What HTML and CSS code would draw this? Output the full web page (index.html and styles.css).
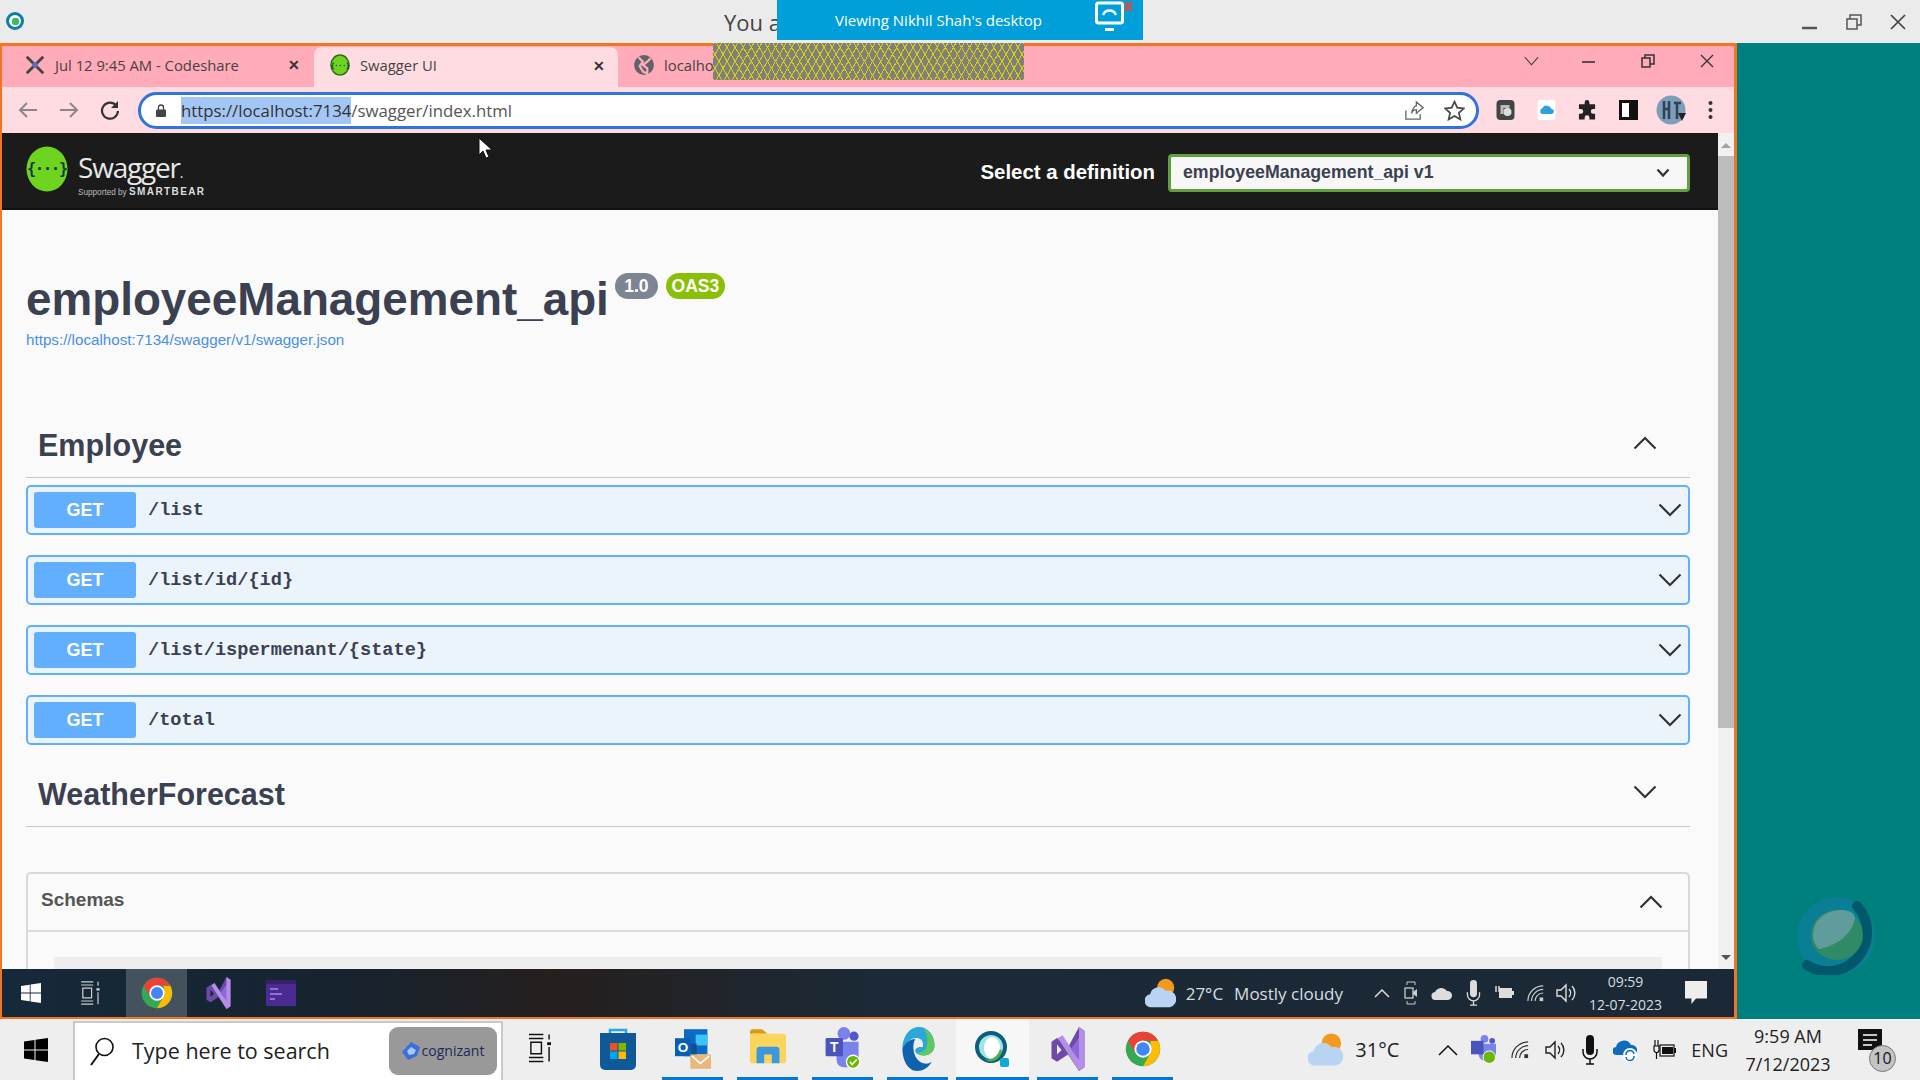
FILE: index.html
```html
<!DOCTYPE html>
<html lang="en">
<head>
    <meta charset="UTF-8">
    <meta name="viewport" content="width=device-width, initial-scale=1.0">
    <title>Swagger UI</title>
    <link rel="stylesheet" href="styles.css">
</head>
<body>

    <svg class="sprites" width="0" height="0">
        <symbol id="chrome" viewBox="0 0 48 48">
            <circle cx="24" cy="24" r="23" fill="#34a853"/>
            <path fill="#fbbc04" d="M44 13A23 23 0 0 1 24 47L34 29V13Z"/>
            <path fill="#ea4335" d="M24 1A23 23 0 0 1 44 13H24L14 30L4 13A23 23 0 0 1 24 1Z"/>
            <circle cx="24" cy="24" r="11.5" fill="#fff"/>
            <circle cx="24" cy="24" r="9" fill="#4285f4"/>
        </symbol>
        <symbol id="vs" viewBox="0 0 36 48">
            <path fill="#6d4aa8" d="M0 16L6 12L18 22L30 0L36 4V44L30 48L18 30L6 38L0 34ZM6 19V30L11 25Z"/>
            <path fill="#b48fe8" d="M30 0L36 4V44L30 48L7 12L12 9L22 24L30 12Z"/>
            <path fill="#8f67d8" d="M30 13V36L21 24Z"/>
        </symbol>
        <symbol id="cloud" viewBox="0 0 36 36">
            <circle cx="24" cy="11" r="10" fill="#f39a1e"/>
            <path fill="#b9d4f2" d="M8 34A7.500 7.500 0 0 1 6 19A10 10 0 0 1 24 15A9 9 0 0 1 29 34Z"/>
        </symbol>
        <symbol id="wifi" viewBox="0 0 20 20">
            <g fill="none" stroke="currentColor" stroke-width="1.300">
                <path d="M1 19A17 17 0 0 1 18 2"/>
                <path d="M5 19A13 13 0 0 1 18 6"/>
                <path d="M9 19A9 9 0 0 1 18 10"/>
            </g>
            <rect x="14" y="15" width="4" height="4" fill="currentColor"/>
        </symbol>
        <symbol id="speaker" viewBox="0 0 22 22">
            <g fill="none" stroke="currentColor" stroke-width="1.400">
                <path d="M1 8H5L10 3V19L5 14H1Z"/>
                <path d="M13 7A6 6 0 0 1 13 15"/>
                <path d="M16 4A10 10 0 0 1 16 18"/>
            </g>
        </symbol>
        <symbol id="mic" viewBox="0 0 16 30">
            <rect x="4" y="0" width="8" height="20" rx="4" fill="currentColor"/>
            <path d="M1 14V17A7 7 0 0 0 15 17V14M8 24V29M4 29H12" fill="none" stroke="currentColor" stroke-width="1.500"/>
        </symbol>
        <symbol id="chev-down" viewBox="0 0 24 14">
            <path d="M1.500 1.500L12 12L22.500 1.500" fill="none" stroke="currentColor" stroke-width="2.200"/>
        </symbol>
        <symbol id="chev-up" viewBox="0 0 24 14">
            <path d="M1.500 12.500L12 2L22.500 12.500" fill="none" stroke="currentColor" stroke-width="2.200"/>
        </symbol>
        <symbol id="winlogo" viewBox="0 0 24 24">
            <path fill="currentColor" d="M0 3.500L10.500 2V11.500H0ZM11.500 1.800L24 0V11.500H11.500ZM0 12.500H10.500V22L0 20.500ZM11.500 12.500H24V24L11.500 22.200Z"/>
        </symbol>
        <symbol id="taskview" viewBox="0 0 24 30">
            <path d="M1 1H16M1 5H16M1 25H16M1 29H16M3 9H14V21H3ZM22 1V6M22 14V29" fill="none" stroke="currentColor" stroke-width="1.500"/>
            <rect x="20" y="9" width="4" height="3" fill="currentColor"/>
        </symbol>
        <symbol id="bell" viewBox="0 0 24 26">
            <path fill="currentColor" d="M0 0H24V19H12L7 25V19H0Z"/>
        </symbol>
    </svg>

    <header class="titlebar">
        <svg class="app-logo" viewBox="0 0 18 18">
            <circle cx="9" cy="9" r="7.500" fill="#fff" stroke="#0a7fa0" stroke-width="3"/>
            <circle cx="9.500" cy="9.500" r="3.800" fill="#49b36b"/>
        </svg>
        <span class="titlebar-text">You a</span>
        <div class="win-controls win-controls-outer">
            <svg viewBox="0 0 16 16"><path d="M0 14H15" stroke="#555" stroke-width="2.500"/></svg>
            <svg viewBox="0 0 16 16"><path d="M1 5H11V15H1ZM4 5V1H15V11H11" fill="none" stroke="#555" stroke-width="1.500"/></svg>
            <svg viewBox="0 0 16 16"><path d="M1 1L15 15M15 1L1 15" stroke="#444" stroke-width="1.700"/></svg>
        </div>
    </header>

    <div class="share-banner">
        <span>Viewing Nikhil Shah's desktop</span>
        <svg class="share-icon" viewBox="0 0 38 34">
            <rect x="1.500" y="2" width="26" height="20" rx="2" fill="none" stroke="#fff" stroke-width="3"/>
            <path d="M8 14A7 7 0 0 1 21 14" fill="none" stroke="#fff" stroke-width="2.500"/>
            <rect x="10" y="27" width="9" height="3" fill="#fff"/>
            <path d="M30 1L37 10M37 1L30 10" stroke="#e0483e" stroke-width="2.500"/>
        </svg>
    </div>

    <main class="desk">
        <section class="remote">
            <div class="tabs">
                <div class="tab">
                    <svg class="fav" viewBox="0 0 24 24">
                        <path d="M3 3L21 21M21 3L3 21" stroke="#444" stroke-width="3"/>
                        <circle cx="12" cy="12" r="3" fill="#5a6fd0"/>
                    </svg>
                    <span class="tab-title">Jul 12 9:45 AM - Codeshare</span>
                    <span class="tab-x">✕</span>
                </div>
                <div class="tab tab-active">
                    <svg class="fav" viewBox="0 0 42 46">
                        <ellipse cx="21" cy="23" rx="19" ry="21" fill="#6fd41f" stroke="#2c6e1a" stroke-width="3"/>
                        <text x="21" y="29" text-anchor="middle" class="logo-braces">{···}</text>
                    </svg>
                    <span class="tab-title">Swagger UI</span>
                    <span class="tab-x">✕</span>
                </div>
                <div class="tab tab-third">
                    <svg class="fav" viewBox="0 0 20 20">
                        <circle cx="10" cy="10" r="9" fill="#5f6368"/>
                        <path d="M5 3L9 7L6 11L9 16L13 18L13 13L9 10L13 7L16 4" fill="none" stroke="#ffabb9" stroke-width="2"/>
                    </svg>
                    <span class="tab-title">localho</span>
                </div>
                <div class="win-controls win-controls-inner">
                    <svg class="tab-list" viewBox="0 0 16 10"><path d="M1 1L8 9L15 1" fill="none" stroke="#333" stroke-width="1.200"/></svg>
                    <svg viewBox="0 0 14 14"><path d="M0 8H13" stroke="#333" stroke-width="1.600"/></svg>
                    <svg viewBox="0 0 14 14"><path d="M1 4H9V13H1ZM4 4V1H13V10H9" fill="none" stroke="#333" stroke-width="1.500"/></svg>
                    <svg viewBox="0 0 14 14"><path d="M1 1L13 13M13 1L1 13" stroke="#333" stroke-width="1.300"/></svg>
                </div>
            </div>
            <div class="hatch"></div>

            <div class="toolbar">
                <svg class="nav-btn" viewBox="0 0 20 20"><path d="M19 10H2M9 3L2 10L9 17" fill="none" stroke="#8d8589" stroke-width="2"/></svg>
                <svg class="nav-btn" viewBox="0 0 20 20"><path d="M1 10H18M11 3L18 10L11 17" fill="none" stroke="#8d8589" stroke-width="2"/></svg>
                <svg class="nav-btn" viewBox="0 0 20 20"><path d="M16.500 6A8 8 0 1 0 18 11" fill="none" stroke="#333" stroke-width="2.200"/><path d="M18 1V8H11Z" fill="#333"/></svg>
                <div class="omnibox">
                    <svg class="lock" viewBox="0 0 10 13"><path d="M2.500 6V3.500A2.500 2.500 0 0 1 7.500 3.500V6" fill="none" stroke="#444" stroke-width="1.300"/><rect y="5.500" width="10" height="7.500" rx="1" fill="#444"/></svg>
                    <span class="url"><span class="url-sel">https://localhost:7134</span>/swagger/index.html</span>
                    <svg class="omni-icon" viewBox="0 0 22 22"><path d="M3 11V20H18V15M9 14C10 8 13 6 14 6V2L21 8L14 14V10C12 10 10 11 9 14Z" fill="none" stroke="#666" stroke-width="1.400"/></svg>
                    <svg class="omni-icon" viewBox="0 0 20 20"><path d="M10 1.500L12.600 7.300L19 8L14.200 12.200L15.600 18.500L10 15.200L4.400 18.500L5.800 12.200L1 8L7.400 7.300Z" fill="none" stroke="#444" stroke-width="1.600"/></svg>
                </div>
                <div class="ext-icons">
                    <svg viewBox="0 0 18 20"><rect width="18" height="20" rx="4" fill="#444"/><circle cx="11" cy="12" r="4" fill="#ddd"/><path d="M4 5H13V8H7V14H4Z" fill="#bbb"/></svg>
                    <svg viewBox="0 0 18 20"><rect width="18" height="20" rx="3" fill="#fff"/><path d="M4 14A3.500 3.500 0 0 1 5 8A5 5 0 0 1 14 9A2.500 2.500 0 0 1 14 14Z" fill="#2f9fe0"/></svg>
                    <svg viewBox="0 0 20 20"><path fill="#222" d="M7 2A2.500 2.500 0 0 1 12 2V4H18V9H16A2.500 2.500 0 0 0 16 14H18V20H12V18A2.500 2.500 0 0 0 7 18V20H1V14H3A2.500 2.500 0 0 0 3 9H1V4H7Z"/></svg>
                    <svg viewBox="0 0 19 20"><path d="M1.500 1.500H17.500V18.500H1.500Z" fill="#fff" stroke="#111" stroke-width="3"/><rect x="10" y="2" width="7" height="16" fill="#111"/></svg>
                    <svg class="avatar" viewBox="0 0 30 30"><circle cx="15" cy="15" r="14.500" fill="#7e9db8"/><path d="M8 6V24M13 6V24M8 14H13M18 8H25M21 8V24" stroke="#2d4257" stroke-width="2.500"/><path d="M22 18H30L26 26Z" fill="#222"/></svg>
                    <svg class="dots" viewBox="0 0 4 20"><circle cx="2" cy="3" r="2" fill="#333"/><circle cx="2" cy="10" r="2" fill="#333"/><circle cx="2" cy="17" r="2" fill="#333"/></svg>
                </div>
            </div>

            <div class="viewport">
                <div class="swagger-page">
                    <div class="topbar">
                        <div class="brand">
                            <svg class="brand-mark" viewBox="0 0 42 46">
                                <ellipse cx="21" cy="23" rx="20.500" ry="22.500" fill="#6fd41f"/>
                                <text x="21" y="28" text-anchor="middle" class="logo-braces">{···}</text>
                            </svg>
                            <div class="brand-text">
                                <span class="brand-name">Swagger<small>.</small></span>
                                <span class="brand-sub">Supported by <b>SMARTBEAR</b></span>
                            </div>
                        </div>
                        <label class="definition">Select a definition</label>
                        <div class="select-box">
                            <span>employeeManagement_api v1</span>
                            <svg class="select-chev" viewBox="0 0 14 10"><path d="M1.500 1.500L7 7.500L12.500 1.500" fill="none" stroke="#333" stroke-width="2.200"/></svg>
                        </div>
                    </div>

                    <div class="content">
                        <div class="info">
                            <div class="title-row">
                                <h1>employeeManagement_api</h1>
                                <span class="badge badge-version">1.0</span>
                                <span class="badge badge-oas">OAS3</span>
                            </div>
                            <a class="spec-link" href="#">https://localhost:7134/swagger/v1/swagger.json</a>
                        </div>

                        <div class="tag-head">
                            <h3>Employee</h3>
                            <svg class="tag-chev"><use href="#chev-up"/></svg>
                        </div>
                        <div class="ops">
                            <div class="op"><span class="op-method">GET</span><span class="op-path">/list</span><svg class="op-chev"><use href="#chev-down"/></svg></div>
                            <div class="op"><span class="op-method">GET</span><span class="op-path">/list/id/{id}</span><svg class="op-chev"><use href="#chev-down"/></svg></div>
                            <div class="op"><span class="op-method">GET</span><span class="op-path">/list/ispermenant/{state}</span><svg class="op-chev"><use href="#chev-down"/></svg></div>
                            <div class="op"><span class="op-method">GET</span><span class="op-path">/total</span><svg class="op-chev"><use href="#chev-down"/></svg></div>
                        </div>

                        <div class="tag-head tag-head-second">
                            <h3>WeatherForecast</h3>
                            <svg class="tag-chev"><use href="#chev-down"/></svg>
                        </div>

                        <div class="schemas">
                            <div class="schemas-head">
                                <h4>Schemas</h4>
                                <svg class="schemas-chev"><use href="#chev-up"/></svg>
                            </div>
                            <div class="schemas-body"><div class="schema-item"></div></div>
                        </div>
                    </div>
                </div>
                <div class="scrollbar">
                    <span class="arrow-up"></span>
                    <div class="thumb"></div>
                    <span class="arrow-down"></span>
                </div>
            </div>

            <div class="inner-taskbar">
                <svg class="it-start"><use href="#winlogo"/></svg>
                <svg class="it-view"><use href="#taskview"/></svg>
                <div class="it-tile"><svg class="it-chrome"><use href="#chrome"/></svg></div>
                <svg class="it-vs"><use href="#vs"/></svg>
                <svg class="it-term" viewBox="0 0 30 26"><rect width="30" height="26" rx="1" fill="#4b2a91"/><rect width="30" height="4" fill="#37206b"/><path d="M4 9H12M4 14H16M4 19H9" stroke="#8d73c9" stroke-width="2"/></svg>

                <div class="it-tray">
                    <svg class="it-cloud"><use href="#cloud"/></svg>
                    <span class="it-temp">27°C</span>
                    <span class="it-weather">Mostly cloudy</span>
                    <svg class="it-caret" viewBox="0 0 16 10"><path d="M1 9L8 2L15 9" fill="none" stroke="#ddd" stroke-width="1.500"/></svg>
                    <svg class="it-sys-cam" viewBox="0 0 14 24"><path d="M3 4V1H11V4M3 20V23H11V20" fill="none" stroke="#ccc"/><rect x="1" y="7" width="8" height="10" fill="none" stroke="#ccc" stroke-width="1.300"/><path d="M9 11L13 8V16L9 13" fill="#ccc"/></svg>
                    <svg class="it-sys-cloud" viewBox="0 0 22 16"><path d="M5 15A4 4 0 0 1 4 7A7 7 0 0 1 16 6A4.500 4.500 0 0 1 17 15Z" fill="#ddd"/></svg>
                    <svg class="it-sys-mic"><use href="#mic"/></svg>
                    <svg class="it-sys-batt" viewBox="0 0 20 16"><rect x="5" y="3" width="13" height="10" fill="#ddd"/><path d="M2 1V7M5 1V7" stroke="#ddd" stroke-width="1.500"/><rect x="18" y="6" width="2" height="4" fill="#ddd"/></svg>
                    <svg class="it-sys-wifi"><use href="#wifi"/></svg>
                    <svg class="it-sys-speaker"><use href="#speaker"/></svg>
                    <div class="it-clock"><span>09:59</span><span>12-07-2023</span></div>
                    <svg class="it-notif"><use href="#bell"/></svg>
                </div>
            </div>
        </section>

        <aside class="teal">
            <svg class="teal-logo" viewBox="0 0 78 78">
                <circle cx="39" cy="39" r="39" fill="#0a7e95"/>
                <path d="M60 9A39 39 0 0 1 10 68" fill="none" stroke="#00586a" stroke-width="10" stroke-linecap="round"/>
                <ellipse cx="40" cy="38" rx="26" ry="25" fill="#2f8a65"/>
                <path d="M16 38C16 22 30 13 44 13C52 13 56 15 58 20C56 36 42 48 22 52C18 48 16 44 16 38Z" fill="#619c9c"/>
            </svg>
        </aside>
    </main>

    <footer class="taskbar">
        <svg class="tb-start"><use href="#winlogo"/></svg>
        <div class="search">
            <svg class="search-icon" viewBox="0 0 24 30"><circle cx="14.500" cy="10" r="8.500" fill="none" stroke="#111" stroke-width="1.600"/><path d="M9 17L1 28" stroke="#111" stroke-width="2"/></svg>
            <span class="search-text">Type here to search</span>
            <div class="chip">
                <svg class="chip-logo" viewBox="0 0 18 18"><path d="M9 0L18 5L15 14L6 18L0 10Z" fill="#3a6fd8"/><path d="M9 5L14 8L12 12L7 13L5 9Z" fill="#a8c8f0"/></svg>
                <span>cognizant</span>
            </div>
        </div>
        <svg class="tb-view"><use href="#taskview"/></svg>
        <div class="apps">
            <div class="app">
                <svg class="app-icon" viewBox="0 0 36 44">
                    <path d="M10 8V3H26V8" fill="none" stroke="#27a6e8" stroke-width="2.500"/>
                    <path d="M0 6H36V38A5 5 0 0 1 31 43H5A5 5 0 0 1 0 38Z" fill="#0f5a96"/>
                    <rect x="10" y="16" width="7.500" height="7.500" fill="#f25022"/><rect x="18.500" y="16" width="7.500" height="7.500" fill="#7fba00"/>
                    <rect x="10" y="24.500" width="7.500" height="7.500" fill="#00a4ef"/><rect x="18.500" y="24.500" width="7.500" height="7.500" fill="#ffb900"/>
                </svg>
            </div>
            <div class="app app-on">
                <svg class="app-icon" viewBox="0 0 40 44">
                    <rect x="10" y="0" width="26" height="28" fill="#0a6cc4"/><rect x="23" y="6" width="13" height="12" fill="#3fc2f5"/><rect x="10" y="16" width="14" height="14" fill="#0f4f96"/>
                    <rect x="0" y="10" width="18" height="20" fill="#0a5fb4"/>
                    <text x="9" y="25" text-anchor="middle" class="icon-letter">O</text>
                    <rect x="17" y="28" width="23" height="16" fill="#e8b77c"/><path d="M19 30L28 38L38 30" fill="none" stroke="#fff" stroke-width="1.800"/>
                </svg>
            </div>
            <div class="app app-on">
                <svg class="app-icon" viewBox="0 0 33 36">
                    <path d="M0 3A3 3 0 0 1 3 0H11L16 4H0Z" fill="#d99b10"/><rect y="4" width="33" height="27" rx="2" fill="#fad45c"/>
                    <path d="M6 31V18A3 3 0 0 1 9 16H24A3 3 0 0 1 27 18V31H20V23H13V31Z" fill="#3c98dc"/>
                </svg>
            </div>
            <div class="app app-on">
                <svg class="app-icon" viewBox="0 0 38 48">
                    <circle cx="20" cy="7" r="7" fill="#7b83eb"/><circle cx="31" cy="10" r="5" fill="#5059c9"/>
                    <path d="M12 16H36V34A10 10 0 0 1 26 44H20A8 8 0 0 1 12 36Z" fill="#7b83eb"/>
                    <rect x="0" y="12" width="19" height="20" rx="1.500" fill="#4b53bc"/>
                    <text x="9.500" y="27" text-anchor="middle" class="icon-letter">T</text>
                    <circle cx="30" cy="38" r="8" fill="#fff"/><circle cx="30" cy="38" r="6.500" fill="#6bb700"/>
                    <path d="M26.500 38L29 41L34 35.500" fill="none" stroke="#fff" stroke-width="1.700"/>
                </svg>
            </div>
            <div class="app app-on">
                <svg class="app-icon" viewBox="0 0 36 48">
                    <path d="M1 24C1 10 9 0 19 0C29 0 36 9 36 20C36 27 31 31 24 31C19 31 15 29 15 26C15 23 19 21 23 22C25 16 21 11 15 12C8 13 3 20 1 24Z" fill="#2ba7d8"/>
                    <path d="M24 2C31 5 36 12 36 20C36 27 31 31 24 31C20 31 18 30 16 28C22 28 27 26 28 19C29 12 27 6 24 2Z" fill="#5ec95c"/>
                    <path d="M1 24C3 18 9 13 15 13C12 18 12 28 17 35C21 40 28 42 33 38C29 45 23 48 17 48C7 48 1 36 1 24Z" fill="#0f62ad"/>
                </svg>
            </div>
            <div class="app app-wide app-on">
                <svg class="app-icon" viewBox="0 0 34 44">
                    <circle cx="15" cy="20" r="14" fill="#9ee3e8" stroke="#0b5f78" stroke-width="4"/>
                    <ellipse cx="16" cy="21" rx="8" ry="11" fill="#fff"/>
                    <path d="M8 32C14 34 22 30 24 22L26 24C25 32 15 38 8 32Z" fill="#4caf50"/>
                    <rect x="24" y="31" width="9" height="9" rx="2" fill="#12a8d8"/>
                </svg>
            </div>
            <div class="app app-on"><svg class="app-icon"><use href="#vs"/></svg></div>
            <div class="app app-on"><svg class="app-icon"><use href="#chrome"/></svg></div>
        </div>
        <div class="tray">
            <svg class="tray-cloud"><use href="#cloud"/></svg>
            <span class="tray-temp">31°C</span>
            <svg class="tray-caret" viewBox="0 0 20 12"><path d="M1 11L10 2L19 11" fill="none" stroke="#111" stroke-width="1.500"/></svg>
            <svg class="tray-teams" viewBox="0 0 26 30">
                <circle cx="14" cy="4" r="4" fill="#7b83eb"/><circle cx="22" cy="6" r="3" fill="#5059c9"/>
                <path d="M8 9H26V20A7 7 0 0 1 19 27H15A7 7 0 0 1 8 20Z" fill="#7b83eb"/><rect y="6" width="13" height="14" fill="#4b53bc"/>
                <circle cx="19" cy="23" r="6.500" fill="#6bb700" stroke="#fff"/>
            </svg>
            <svg class="tray-wifi"><use href="#wifi"/></svg>
            <svg class="tray-speaker"><use href="#speaker"/></svg>
            <svg class="tray-mic"><use href="#mic"/></svg>
            <svg class="tray-drive" viewBox="0 0 24 26"><path d="M4 18A4 4 0 0 1 3 10A8 8 0 0 1 18 8A5 5 0 0 1 20 18Z" fill="#0f6cbd"/><circle cx="17" cy="18" r="7" fill="#fff"/><path d="M13 18A4 4 0 0 1 21 17M21 19A4 4 0 0 1 13 20" fill="none" stroke="#0f6cbd" stroke-width="1.500"/></svg>
            <svg class="tray-batt" viewBox="0 0 24 20"><path d="M3 0V6M6 0V6M2 6H7V10A2.500 2.500 0 0 1 2 10ZM4.500 12V19" fill="none" stroke="#111" stroke-width="1.200"/><rect x="8" y="5" width="14" height="11" fill="none" stroke="#111" stroke-width="1.200"/><rect x="10" y="7" width="11" height="7" fill="#111"/><rect x="22" y="8" width="2" height="5" fill="#111"/></svg>
            <span class="tray-lang">ENG</span>
            <div class="tray-clock"><span>9:59 AM</span><span>7/12/2023</span></div>
            <div class="tray-notif">
                <svg class="tray-bell" viewBox="0 0 24 26"><path fill="#111" d="M0 0H24V21H0Z"/><path d="M5 6H19M5 11H19M5 16H14" stroke="#fff" stroke-width="1.500"/></svg>
                <span class="notif-count">10</span>
            </div>
        </div>
    </footer>

    <svg class="cursor" viewBox="0 0 15 21"><path d="M1 0V17L5 13L8 20L11 19L8 12H14Z" fill="#fff" stroke="#111"/></svg>

</body>
</html>
```

FILE: styles.css
```css
* {
    box-sizing: border-box;
}
body {
    margin: 0;
    width: 1920px;
    height: 1080px;
    overflow: hidden;
    position: relative;
    font-family: "Open Sans", sans-serif;
    background-color: #eeeeee;
    display: flex;
    flex-direction: column;
}
svg {
    display: block;
    flex-shrink: 0;
}
.sprites {
    position: absolute;
}
.logo-braces {
    font-family: "DejaVu Sans Mono", monospace;
    font-weight: bold;
    font-size: 15px;
    letter-spacing: -1px;
    fill: #173647;
}
.icon-letter {
    font-family: "Liberation Sans", sans-serif;
    font-weight: bold;
    font-size: 15px;
    fill: #fff;
}

/* top bar of the viewer */
.titlebar {
    height: 43px;
    background-color: #ebebeb;
    display: flex;
    align-items: center;
    padding-left: 6px;
}
.app-logo {
    width: 18px;
    height: 18px;
    margin-top: -1px;
}
.titlebar-text {
    margin-left: 700px;
    font-size: 22px;
    color: #444;
}
.win-controls {
    margin-left: auto;
    display: flex;
    align-items: center;
}
.win-controls-outer {
    gap: 28px;
    padding-right: 14px;
}
.win-controls-outer svg {
    width: 16px;
    height: 16px;
}
.share-banner {
    position: absolute;
    left: 777px;
    top: 0;
    width: 366px;
    height: 40px;
    background-color: #009fda;
    color: #fff;
    font-size: 15px;
    display: flex;
    align-items: center;
    padding-left: 58px;
    gap: 53px;
}
.share-icon {
    width: 38px;
    height: 34px;
    margin-top: -4px;
}

.desk {
    height: 976px;
    display: flex;
}
.remote {
    width: 1737px;
    border: solid #f47521;
    border-width: 3px 3px 2px 2px;
    display: flex;
    flex-direction: column;
    position: relative;
}
.teal {
    flex: 1;
    background-color: #007f7f;
    position: relative;
}
.teal-logo {
    position: absolute;
    left: 60px;
    top: 854px;
    width: 78px;
    height: 78px;
}

/* browser tabs */
.tabs {
    height: 41px;
    background-color: #ffabb9;
    display: flex;
    font-size: 14.800px;
    color: #444;
}
.tab {
    width: 312px;
    display: flex;
    align-items: center;
    padding-left: 22px;
    padding-right: 14px;
    padding-bottom: 4px;
}
.tab-active {
    background-color: #ffdce2;
    border-radius: 8px 8px 0 0;
    width: 304px;
    padding-left: 15px;
    padding-right: 13px;
    margin-top: 1px;
}
.tab-third {
    width: 100px;
    padding-left: 15px;
}
.fav {
    width: 22px;
    height: 22px;
}
.tab-title {
    margin-left: 9px;
    flex: 1;
    white-space: nowrap;
}
.tab-x {
    font-size: 14px;
    font-weight: bold;
    color: #333;
}
.win-controls-inner {
    gap: 45px;
    padding-right: 20px;
    padding-bottom: 11px;
}
.win-controls-inner svg {
    width: 14px;
    height: 14px;
}
.win-controls-inner .tab-list {
    width: 15px;
    height: 10px;
    margin-right: -2px;
}
.hatch {
    position: absolute;
    left: 711px;
    top: -3px;
    width: 311px;
    height: 37px;
    background-color: #7f7f7f;
    background-image:
        repeating-linear-gradient(60deg, #d8d000 0 1px, transparent 1px 7px),
        repeating-linear-gradient(-60deg, #d8d000 0 1px, transparent 1px 7px);
}

/* address bar */
.toolbar {
    height: 46px;
    background-color: #ffdce2;
    display: flex;
    align-items: center;
    padding-left: 16px;
}
.nav-btn {
    width: 20px;
    height: 20px;
    margin-right: 21px;
}
.omnibox {
    width: 1341px;
    height: 37px;
    margin-left: -3px;
    background-color: #fff;
    border: 3px solid #2f74dc;
    border-radius: 19px;
    display: flex;
    align-items: center;
    padding-left: 15px;
    padding-right: 11px;
}
.lock {
    width: 10px;
    height: 13px;
}
.url {
    margin-left: 15px;
    flex: 1;
    font-size: 16.800px;
    color: #555;
    white-space: nowrap;
}
.url-sel {
    background-color: #a4c6f5;
    color: #333;
    padding: 2px 0;
}
.omni-icon {
    width: 21px;
    height: 21px;
    margin-left: 20px;
}
.ext-icons {
    display: flex;
    align-items: center;
    margin-left: 17px;
    gap: 22px;
}
.ext-icons svg {
    width: 19px;
    height: 20px;
}
.ext-icons .avatar {
    width: 30px;
    height: 30px;
    margin-left: -4px;
}
.ext-icons .dots {
    width: 5px;
    margin-left: 0;
}

.viewport {
    height: 836px;
    display: flex;
}
.swagger-page {
    width: 1716px;
    background-color: #fafafa;
    font-family: "Liberation Sans", Arial, sans-serif;
    color: #3b4151;
    overflow: hidden;
}

/* swagger header */
.topbar {
    height: 77px;
    background-color: #1b1b1b;
    border-bottom: 2px solid #111;
    display: flex;
    align-items: center;
    padding-left: 24px;
    padding-right: 28px;
}
.brand {
    display: flex;
    align-items: center;
    gap: 10px;
    margin-right: auto;
    margin-bottom: 4px;
}
.brand-mark {
    width: 42px;
    height: 46px;
}
.brand-text {
    display: flex;
    flex-direction: column;
    color: #e8e8e8;
    margin-top: 8px;
}
.brand-name {
    font-family: "Open Sans", sans-serif;
    font-size: 28px;
    line-height: 34px;
    letter-spacing: -1.200px;
    margin-top: 4px;
}
.brand-name small {
    font-size: 14px;
}
.brand-sub {
    font-size: 8.200px;
    line-height: 12px;
    color: #bbb;
    margin-top: -4px;
    white-space: nowrap;
}
.brand-sub b {
    font-size: 10px;
    letter-spacing: 1.400px;
    color: #ddd;
}
.definition {
    color: #fff;
    font-size: 20.400px;
    font-weight: bold;
    margin-right: 13px;
    margin-top: 4px;
}
.select-box {
    width: 522px;
    height: 38px;
    margin-top: 4px;
    background-color: #f7f7f7;
    border: 3px solid #62a03f;
    border-radius: 4px;
    display: flex;
    align-items: center;
    justify-content: space-between;
    padding-left: 12px;
    padding-right: 17px;
    font-size: 17.750px;
    font-weight: bold;
    color: #3b4151;
}
.select-chev {
    width: 14px;
    height: 10px;
}

/* swagger content */
.content {
    padding-left: 24px;
    padding-right: 28px;
}
.info {
    height: 159px;
    padding-top: 62px;
}
.title-row {
    display: flex;
    align-items: flex-start;
    height: 56px;
}
h1 {
    margin: 0;
    font-size: 45.800px;
    line-height: 56px;
    font-weight: bold;
    white-space: nowrap;
}
.badge {
    color: #fff;
    font-weight: bold;
    font-size: 17.500px;
    line-height: 26px;
    height: 26px;
    border-radius: 13px;
    text-align: center;
    margin-top: 1px;
}
.badge-version {
    width: 43px;
    margin-left: 6px;
    background-color: #7d8492;
}
.badge-oas {
    width: 59px;
    margin-left: 8px;
    background-color: #89bf04;
}
.spec-link {
    display: block;
    margin-top: 3px;
    font-size: 15.200px;
    color: #4990e2;
    text-decoration: none;
}
.tag-head {
    height: 109px;
    border-bottom: 1px solid #c7c9cd;
    padding-left: 12px;
    padding-right: 33px;
    display: flex;
    align-items: flex-end;
    justify-content: space-between;
}
.tag-head h3 {
    margin: 0 0 14px;
    font-size: 30.500px;
    line-height: 36px;
    font-weight: bold;
}
.tag-chev {
    width: 24px;
    height: 14px;
    margin-bottom: 27px;
    color: #333;
}
.tag-head-second {
    height: 82px;
}
.ops {
    margin-top: 7px;
    display: flex;
    flex-direction: column;
    gap: 20px;
}
.op {
    height: 50px;
    background-color: #ebf3fb;
    border: 2px solid #61affe;
    border-radius: 5px;
    display: flex;
    align-items: center;
    padding-left: 6px;
    padding-right: 6px;
}
.op-method {
    width: 102px;
    height: 36px;
    background-color: #61affe;
    border-radius: 3px;
    color: #fff;
    font-weight: bold;
    font-size: 18px;
    line-height: 36px;
    text-align: center;
}
.op-path {
    margin-left: 12px;
    flex: 1;
    font-family: "Liberation Mono", monospace;
    font-weight: bold;
    font-size: 18.600px;
    color: #3b4151;
}
.op-chev {
    width: 24px;
    height: 14px;
    color: #333;
}
.schemas {
    margin-top: 45px;
    border: 2px solid #d8d8dc;
    border-bottom: 0;
    border-radius: 5px 5px 0 0;
    height: 200px;
}
.schemas-head {
    height: 58px;
    border-bottom: 2px solid #dcdcdf;
    display: flex;
    align-items: center;
    justify-content: space-between;
    padding-left: 13px;
    padding-right: 25px;
}
.schemas-head h4 {
    margin: 0 0 5px;
    font-size: 19px;
    color: #555;
}
.schemas-chev {
    width: 24px;
    height: 14px;
    color: #333;
}
.schemas-body {
    padding: 25px 26px 0;
}
.schema-item {
    height: 40px;
    background-color: #eeeeee;
}

.scrollbar {
    width: 16px;
    background-color: #f1f1f1;
    display: flex;
    flex-direction: column;
    align-items: center;
    padding-top: 10px;
}
.arrow-up, .arrow-down {
    width: 0;
    height: 0;
    border-left: 5px solid transparent;
    border-right: 5px solid transparent;
}
.arrow-up {
    border-bottom: 5px solid #a3a3a3;
}
.arrow-down {
    border-top: 5px solid #555;
    margin-top: 227px;
}
.thumb {
    width: 16px;
    height: 572px;
    margin-top: 8px;
    background-color: #bdbdbd;
}

/* taskbar inside the shared window */
.inner-taskbar {
    flex: 1;
    background: linear-gradient(90deg, #16293a 0%, #17232f 20%, #261f1e 32%, #1b2a36 50%, #1a2935 100%);
    display: flex;
    align-items: center;
    padding-left: 19px;
    color: #d9dde0;
}
.it-start {
    width: 20px;
    height: 20px;
    color: #fff;
}
.it-view {
    width: 20px;
    height: 24px;
    margin-left: 39px;
    color: #d0d0d0;
}
.it-tile {
    width: 61px;
    height: 48px;
    margin-left: 26px;
    background-color: #44525e;
    display: flex;
    align-items: center;
    justify-content: center;
}
.it-chrome {
    width: 32px;
    height: 32px;
}
.it-vs {
    width: 29px;
    height: 32px;
    margin-left: 17px;
}
.it-term {
    width: 30px;
    height: 26px;
    margin-left: 33px;
}
.it-tray {
    margin-left: auto;
    display: flex;
    align-items: center;
    gap: 13px;
    padding-right: 27px;
    font-size: 17px;
}
.it-cloud {
    width: 31px;
    height: 31px;
}
.it-temp {
    margin-left: -3px;
}
.it-weather {
    margin-left: -2px;
}
.it-caret {
    width: 16px;
    height: 10px;
    margin-left: 18px;
}
.it-sys-cam {
    width: 14px;
    height: 24px;
    margin-left: 1px;
}
.it-sys-cloud {
    width: 22px;
    height: 16px;
}
.it-sys-mic {
    width: 15px;
    height: 26px;
    color: #ddd;
}
.it-sys-batt {
    width: 20px;
    height: 16px;
}
.it-sys-wifi {
    width: 18px;
    height: 18px;
    color: #ccc;
}
.it-sys-speaker {
    width: 22px;
    height: 22px;
    margin-left: -2px;
    color: #ddd;
}
.it-clock {
    display: flex;
    flex-direction: column;
    align-items: center;
    font-size: 14px;
    line-height: 23px;
    width: 73px;
    margin-left: -2px;
    white-space: nowrap;
}
.it-notif {
    width: 22px;
    height: 24px;
    margin-left: 10px;
    color: #eee;
}

/* windows taskbar */
.taskbar {
    flex: 1;
    display: flex;
    align-items: flex-end;
    background-color: #eeeeee;
    padding-left: 24px;
}
.tb-start {
    width: 24px;
    height: 24px;
    margin-bottom: 18px;
    color: #000;
}
.search {
    width: 430px;
    height: 59px;
    margin-left: 25px;
    background-color: #fff;
    border: 2px solid #c9c9c9;
    border-bottom: 0;
    display: flex;
    align-items: center;
    padding-left: 15px;
}
.search-icon {
    width: 24px;
    height: 30px;
}
.search-text {
    margin-left: 18px;
    margin-bottom: 3px;
    flex: 1;
    font-size: 21.500px;
    color: #222;
    white-space: nowrap;
}
.chip {
    width: 108px;
    height: 48px;
    margin-right: 4px;
    margin-bottom: 2px;
    background-color: #999;
    border-radius: 9px;
    display: flex;
    align-items: center;
    justify-content: center;
    gap: 2px;
    font-size: 14px;
    color: #1c2b5a;
}
.chip-logo {
    width: 18px;
    height: 18px;
}
.tb-view {
    width: 23px;
    height: 30px;
    margin-left: 25px;
    margin-bottom: 17px;
    color: #111;
}
.apps {
    display: flex;
    margin-left: 36px;
    gap: 14px;
}
.app {
    width: 61px;
    height: 61px;
    padding-top: 2px;
    display: flex;
    align-items: center;
    justify-content: center;
    border-bottom: 3px solid transparent;
}
.app-on {
    border-bottom-color: #0078d7;
}
.app-wide {
    width: 73px;
    margin-left: -6px;
    margin-right: -6px;
    background-color: #f7f7f7;
}
.app-icon {
    width: 36px;
    height: 44px;
}
.tray {
    margin-left: auto;
    height: 61px;
    display: flex;
    align-items: center;
    gap: 15px;
    padding-right: 24px;
    font-size: 20px;
    color: #222;
}
.tray-cloud {
    width: 35px;
    height: 36px;
}
.tray-temp {
    margin-left: -3px;
    margin-right: 24px;
}
.tray-caret {
    width: 20px;
    height: 12px;
}
.tray-teams {
    width: 25px;
    height: 29px;
    margin-left: -2px;
}
.tray-wifi {
    width: 19px;
    height: 19px;
    color: #333;
}
.tray-speaker {
    width: 22px;
    height: 22px;
    color: #222;
}
.tray-mic {
    width: 16px;
    height: 30px;
    color: #111;
}
.tray-drive {
    width: 24px;
    height: 26px;
}
.tray-batt {
    width: 24px;
    height: 20px;
}
.tray-lang {
    font-size: 18px;
}
.tray-clock {
    width: 84px;
    display: flex;
    flex-direction: column;
    align-items: center;
    font-size: 18px;
    line-height: 28px;
    margin-left: 3px;
    white-space: nowrap;
}
.tray-notif {
    width: 38px;
    height: 44px;
    margin-left: 13px;
    position: relative;
}
.tray-bell {
    width: 24px;
    height: 26px;
    margin-left: 0;
    margin-top: 1px;
}
.notif-count {
    position: absolute;
    right: 0;
    bottom: 0;
    width: 27px;
    height: 27px;
    border-radius: 50%;
    background-color: #c4c4c4;
    border: 1px solid #777;
    font-size: 16px;
    line-height: 25px;
    text-align: center;
    color: #111;
}
.cursor {
    position: absolute;
    left: 478px;
    top: 138px;
    width: 15px;
    height: 21px;
}
```
